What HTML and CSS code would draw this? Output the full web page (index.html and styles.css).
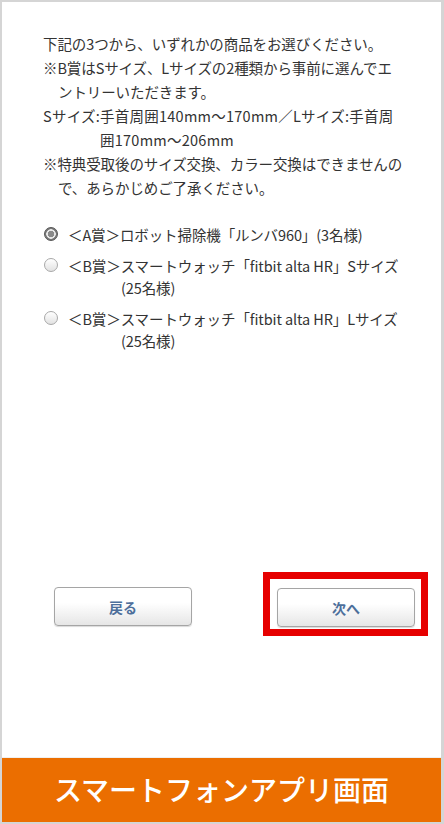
FILE: index.html
```html
<!DOCTYPE html>
<html lang="ja">

<head>
    <meta charset="UTF-8">
    <meta name="viewport" content="width=device-width, initial-scale=1.0">
    <title>スマートフォンアプリ画面</title>
    <link rel="stylesheet" href="styles.css">
</head>

<body>
    <div id="screen">
        <div id="content">
            <div class="notes">
                <p>下記の3つから、いずれかの商品をお選びください。</p>
                <p class="hang">※B賞はSサイズ、Lサイズの2種類から事前に選んでエントリーいただきます。</p>
                <p class="size">Sサイズ:手首周囲140mm～170mm／Lサイズ:手首周囲170mm～206mm</p>
                <p class="hang">※特典受取後のサイズ交換、カラー交換はできませんので、あらかじめご了承ください。</p>
            </div>

            <ul class="prizes">
                <li><label><input type="radio" name="prize" checked><span>＜A賞＞ロボット掃除機「ルンバ960」<em>(3名様)</em></span></label></li>
                <li><label><input type="radio" name="prize"><span>＜B賞＞スマートウォッチ「fitbit alta HR」Sサイズ<em>(25名様)</em></span></label></li>
                <li><label><input type="radio" name="prize"><span>＜B賞＞スマートウォッチ「fitbit alta HR」Lサイズ<em>(25名様)</em></span></label></li>
            </ul>

            <div class="buttons">
                <button class="btn btn_back">戻る</button>
                <div class="mark"><button class="btn">次へ</button></div>
            </div>
        </div>
        <div id="footer">スマートフォンアプリ画面</div>
    </div>
</body>

</html>
```

FILE: styles.css
```css
* {
    box-sizing: border-box;
}

html,
body {
    margin: 0;
    padding: 0;
}

body {
    background-color: #d5d5d5;
    font-family: "Noto Sans CJK JP", sans-serif;
    color: #333;
}

#screen {
    width: 439px;
    height: 820px;
    margin: 2px 3px 2px 2px;
    background-color: #fff;
    display: flex;
    flex-direction: column;
}

#content {
    flex: 1;
    display: flex;
    flex-direction: column;
    padding: 30px 0 0 41px;
}

.notes {
    width: 360px;
    font-size: 14.5px;
    line-height: 24px;
    letter-spacing: -0.1px;
    line-break: strict;
}

.notes p {
    margin: 0;
}

.notes .hang {
    padding-left: 15px;
    text-indent: -15px;
}

.notes .size {
    padding-left: 57px;
    text-indent: -57px;
    letter-spacing: 0.25px;
}

.prizes {
    list-style: none;
    margin: 24px 0 0 0;
    padding: 0;
    width: 362px;
    font-size: 14.5px;
    line-height: 22px;
    letter-spacing: -0.1px;
}

.prizes li {
    margin-bottom: 9px;
}

.prizes label {
    display: flex;
    align-items: flex-start;
}

.prizes span {
    padding-left: 53px;
    text-indent: -53px;
}

.prizes em {
    font-style: normal;
    white-space: nowrap;
}

.prizes input {
    -webkit-appearance: none;
    appearance: none;
    flex: none;
    width: 14px;
    height: 14px;
    margin: 3px 10px 0 1px;
    border: 1px solid #a8a8a8;
    border-radius: 50%;
    background: linear-gradient(#fff, #e2e2e2);
}

.prizes input:checked {
    border: 1px solid #555;
    background: radial-gradient(circle, #8a8a8a 0 3px, #e8e8e8 3.5px 4.5px, #7a7a7a 5px);
}

.buttons {
    margin-top: auto;
    margin-bottom: 121px;
    display: flex;
    align-items: flex-start;
    padding-left: 11px;
}

.btn {
    width: 138px;
    height: 39px;
    border: 1px solid #a5a5a5;
    border-radius: 4px;
    background: linear-gradient(#fff 40%, #e6e6e6);
    box-shadow: 0 1px 1px rgb(0 0 0 / 15%);
    font-family: "Noto Sans CJK JP", sans-serif;
    font-size: 14px;
    font-weight: bold;
    color: #4d6f9b;
    padding: 0;
}

.btn_back {
    margin-top: 15px;
}

.mark {
    margin-left: 71px;
    border: 7px solid #e60000;
    padding: 9px 6px 2px 7px;
}

#footer {
    height: 65px;
    background-color: #eb6e00;
    border-top: 1px solid #f0f0f0;
    color: #fff;
    font-size: 28px;
    font-weight: 500;
    line-height: 62px;
    text-align: center;
}
```
